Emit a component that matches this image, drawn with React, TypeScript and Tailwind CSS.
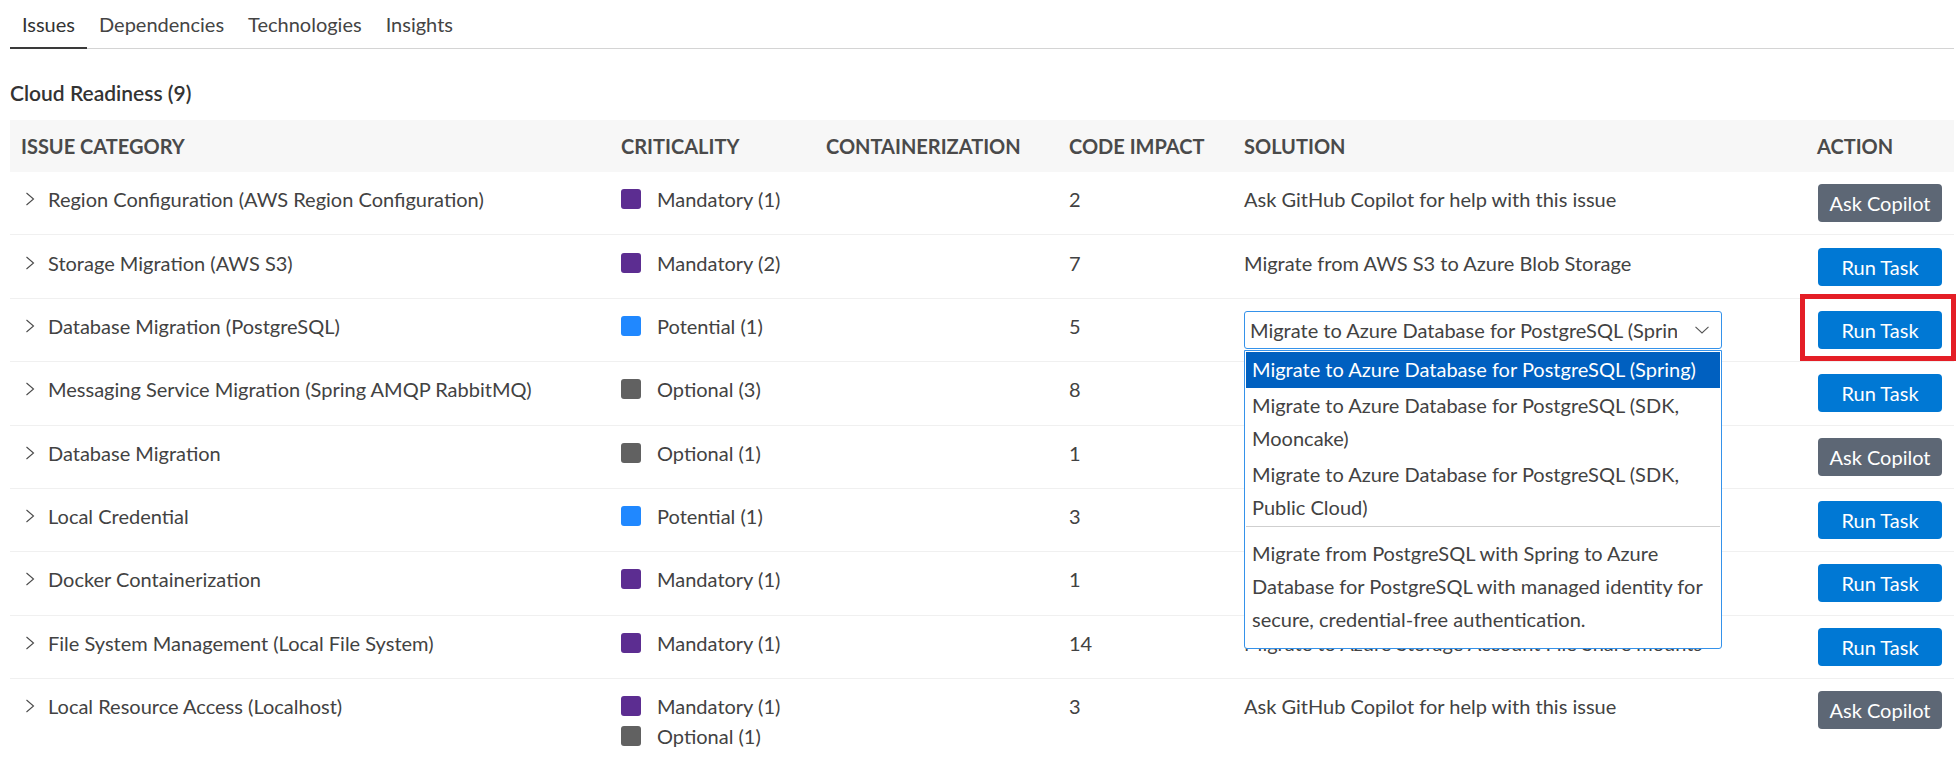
import React from "react";

type Crit = { label: string; color: string };
type Row = {
  name: string;
  crit: Crit[];
  impact: string;
  solution?: string;
  action: "copilot" | "task";
  select?: boolean;
  flagged?: boolean;
};

const MANDATORY = "#5c2d91";
const POTENTIAL = "#2088ff";
const OPTIONAL = "#616161";

// rows 4-7 have their solution hidden behind the open dropdown
const rows: Row[] = [
  {
    name: "Region Configuration (AWS Region Configuration)",
    crit: [{ label: "Mandatory (1)", color: MANDATORY }],
    impact: "2",
    solution: "Ask GitHub Copilot for help with this issue",
    action: "copilot",
  },
  {
    name: "Storage Migration (AWS S3)",
    crit: [{ label: "Mandatory (2)", color: MANDATORY }],
    impact: "7",
    solution: "Migrate from AWS S3 to Azure Blob Storage",
    action: "task",
  },
  {
    name: "Database Migration (PostgreSQL)",
    crit: [{ label: "Potential (1)", color: POTENTIAL }],
    impact: "5",
    select: true,
    action: "task",
    flagged: true,
  },
  {
    name: "Messaging Service Migration (Spring AMQP RabbitMQ)",
    crit: [{ label: "Optional (3)", color: OPTIONAL }],
    impact: "8",
    action: "task",
  },
  {
    name: "Database Migration",
    crit: [{ label: "Optional (1)", color: OPTIONAL }],
    impact: "1",
    action: "copilot",
  },
  {
    name: "Local Credential",
    crit: [{ label: "Potential (1)", color: POTENTIAL }],
    impact: "3",
    action: "task",
  },
  {
    name: "Docker Containerization",
    crit: [{ label: "Mandatory (1)", color: MANDATORY }],
    impact: "1",
    action: "task",
  },
  {
    name: "File System Management (Local File System)",
    crit: [{ label: "Mandatory (1)", color: MANDATORY }],
    impact: "14",
    solution: "Migrate to Azure Storage Account File Share mounts",
    action: "task",
  },
  {
    name: "Local Resource Access (Localhost)",
    crit: [
      { label: "Mandatory (1)", color: MANDATORY },
      { label: "Optional (1)", color: OPTIONAL },
    ],
    impact: "3",
    solution: "Ask GitHub Copilot for help with this issue",
    action: "copilot",
  },
];

const tabs = ["Issues", "Dependencies", "Technologies", "Insights"];

const ChevronRight = () => (
  <svg width="20" height="30" viewBox="0 0 20 30" className="shrink-0">
    <path d="M5.5 9 L12.5 15 L5.5 21" fill="none" stroke="#4a4a4a" strokeWidth="1.1" />
  </svg>
);

const ActionButton = ({ kind }: { kind: "copilot" | "task" }) => (
  <button
    className={
      kind === "copilot"
        ? "w-[124px] h-[38px] rounded-[4px] bg-[#5d6775] text-white text-[20px] leading-[38px]"
        : "w-[124px] h-[38px] rounded-[4px] bg-[#0078d4] text-white text-[20px] leading-[38px]"
    }
  >
    {kind === "copilot" ? "Ask Copilot" : "Run Task"}
  </button>
);

const SolutionSelect = () => (
  <div className="relative w-[478px]">
    {/* closed select */}
    <div className="h-[38px] border border-[#3592ea] rounded-[3px] flex items-center pl-[5px] pr-[12px]">
      <span className="flex-1 overflow-hidden whitespace-nowrap leading-[30px] mr-[18px]">
        Migrate to Azure Database for PostgreSQL (Spring)
      </span>
      <svg width="14" height="8" viewBox="0 0 14 8" className="shrink-0">
        <path d="M0.5 0.8 L7 7 L13.5 0.8" fill="none" stroke="#555" strokeWidth="1.1" />
      </svg>
    </div>

    {/* open listbox */}
    <div className="absolute left-0 top-[39px] z-10 w-full bg-white border border-[#3592ea] rounded-b-[3px] p-px">
      <div className="bg-[#0060c0] text-white leading-[33px] py-[1.5px] pl-[6px] whitespace-nowrap">
        Migrate to Azure Database for PostgreSQL (Spring)
      </div>
      <div className="leading-[33px] py-[1.5px] pl-[6px] whitespace-nowrap">
        Migrate to Azure Database for PostgreSQL (SDK,
        <br />
        Mooncake)
      </div>
      <div className="leading-[33px] py-[1.5px] pl-[6px] whitespace-nowrap">
        Migrate to Azure Database for PostgreSQL (SDK,
        <br />
        Public Cloud)
      </div>
      <div className="border-t border-[#cfcfcf] leading-[33px] pt-[10px] pb-[11px] pl-[6px] whitespace-nowrap">
        Migrate from PostgreSQL with Spring to Azure
        <br />
        Database for PostgreSQL with managed identity for
        <br />
        secure, credential-free authentication.
      </div>
    </div>
  </div>
);

export default function App() {
  return (
    <div className="font-['Lato','Segoe_UI',sans-serif] text-[20px] text-[#424242] bg-white pl-[10px] pr-[6px]">
      {/* tabs */}
      <div className="flex border-b border-[#d4d4d4]">
        {tabs.map((t, i) => (
          <div
            key={t}
            className={
              i === 0
                ? "px-[12px] pt-[9px] pb-[8px] leading-[30px] border-b-2 border-[#3a3a3a] -mb-px text-[#333]"
                : "px-[12px] pt-[9px] pb-[8px] leading-[30px] border-b-2 border-transparent -mb-px text-[#444]"
            }
          >
            {t}
          </div>
        ))}
      </div>

      <h2 className="mt-[29px] mb-[12px] leading-[30px] text-[21px] font-semibold text-[#333]">
        Cloud Readiness (9)
      </h2>

      <table className="w-full table-fixed border-collapse">
        <colgroup>
          <col className="w-[600px]" />
          <col className="w-[205px]" />
          <col className="w-[243px]" />
          <col className="w-[175px]" />
          <col className="w-[573px]" />
          <col />
        </colgroup>
        <thead>
          <tr className="bg-[#f7f7f7] text-[#4a4a4a] uppercase text-left">
            <th className="px-[11px] py-[11px] leading-[30px] font-bold">Issue Category</th>
            <th className="px-[11px] py-[11px] leading-[30px] font-bold">Criticality</th>
            <th className="px-[11px] py-[11px] leading-[30px] font-bold">Containerization</th>
            <th className="px-[11px] py-[11px] leading-[30px] font-bold">Code Impact</th>
            <th className="px-[11px] py-[11px] leading-[30px] font-bold">Solution</th>
            <th className="px-[11px] py-[11px] leading-[30px] font-bold">Action</th>
          </tr>
        </thead>
        <tbody>
          {rows.map((r) => (
            <tr key={r.name + r.impact} className="border-b border-[#f0f0f0] align-top">
              <td className="px-[11px] py-[12.2px]">
                <div className="flex items-center gap-[7px] leading-[30px]">
                  <ChevronRight />
                  <span className="whitespace-nowrap">{r.name}</span>
                </div>
              </td>
              <td className="px-[11px] py-[12.2px]">
                <div className="flex flex-col">
                  {r.crit.map((c) => (
                    <div key={c.label} className="flex items-center gap-[16px] leading-[30px] h-[30px]">
                      <span
                        className="w-[20px] h-[20px] rounded-[3px] shrink-0"
                        style={{ backgroundColor: c.color }}
                      />
                      <span className="whitespace-nowrap">{c.label}</span>
                    </div>
                  ))}
                </div>
              </td>
              <td className="px-[11px] py-[12.2px]" />
              <td className="px-[11px] py-[12.2px] leading-[30px]">{r.impact}</td>
              <td className="px-[11px] py-[12.2px] leading-[30px]">
                {r.select ? (
                  <SolutionSelect />
                ) : (
                  r.solution && <span className="whitespace-nowrap">{r.solution}</span>
                )}
              </td>
              <td className="pl-[12px] pr-[11px] py-[12.2px]">
                <div className="relative w-[124px]">
                  <ActionButton kind={r.action} />
                  {r.flagged && (
                    <div className="absolute -left-[18px] -right-[14px] -top-[17px] -bottom-[12px] border-[5px] border-[#e41e26] pointer-events-none" />
                  )}
                </div>
              </td>
            </tr>
          ))}
        </tbody>
      </table>
    </div>
  );
}
